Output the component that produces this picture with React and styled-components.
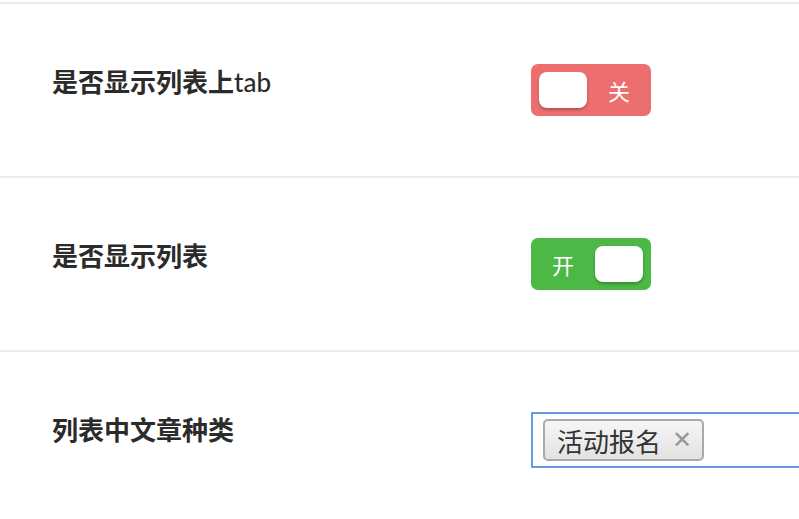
import React from "react";
import styled, { createGlobalStyle } from "styled-components";

const Global = createGlobalStyle`
  html, body { margin: 0; padding: 0; background: #fff; }
  body { font-family: "Lato", "Noto Sans CJK SC", sans-serif; color: #333; overflow: hidden; }
`;

const Page = styled.div`
  width: 799px;
  padding-top: 2px;
`;

const TopRule = styled.div`
  height: 2px;
  background: #ececec;
`;

const Row = styled.div`
  display: flex;
  align-items: flex-start;
  padding: 60px 0 60px 52px;
  border-bottom: 2px solid #ececec;
`;

const Label = styled.div`
  width: 479px;
  flex-shrink: 0;
  font-size: 26px;
  font-weight: 700;
  line-height: 36px;
  color: #2b2b2b;
`;

const Latin = styled.span`
  font-weight: 500;
`;

const Switch = styled.div`
  width: 120px;
  height: 52px;
  border-radius: 7px;
  background: ${(p) => (p.$on ? "#4cb846" : "#ed6e6e")};
  display: flex;
  flex-direction: ${(p) => (p.$on ? "row" : "row-reverse")};
  align-items: center;
  box-sizing: border-box;
  padding: ${(p) => (p.$on ? "0 8px 0 0" : "0 0 0 8px")};
  cursor: pointer;
`;

const SwitchText = styled.span`
  flex: 1;
  text-align: center;
  color: #fff;
  font-size: 22px;
  font-family: "Noto Sans CJK SC", sans-serif;
  line-height: 1;
`;

const Knob = styled.span`
  width: 48px;
  height: 36px;
  border-radius: 8px;
  background: #fff;
  box-shadow: 0 2px 3px rgba(0, 0, 0, 0.25);
  flex-shrink: 0;
`;

const SelectBox = styled.div`
  flex: 1;
  height: 56px;
  box-sizing: border-box;
  border: 2px solid #6a98e4;
  border-right: none;
  display: flex;
  align-items: center;
  padding-left: 10px;
  background: #fff;
`;

const Tag = styled.div`
  display: flex;
  align-items: center;
  height: 42px;
  box-sizing: border-box;
  padding: 0 10px 0 12px;
  border: 2px solid #aaa;
  border-radius: 5px;
  background: linear-gradient(to bottom, #f6f6f6 0%, #eaeaea 60%, #e2e2e2 100%);
  font-family: "Noto Sans CJK SC", sans-serif;
  font-size: 26px;
  color: #333;
  gap: 11px;
`;

const TagClose = styled.span`
  color: #999;
  font-size: 24px;
  font-family: "DejaVu Sans", sans-serif;
  line-height: 1;
`;

function Toggle({ on }) {
  return (
    <Switch $on={on}>
      <SwitchText>{on ? "开" : "关"}</SwitchText>
      <Knob />
    </Switch>
  );
}

export default function App() {
  return (
    <>
      <Global />
      <Page>
        <TopRule />
        <Row>
          <Label>
            是否显示列表上<Latin>tab</Latin>
          </Label>
          <Toggle on={false} />
        </Row>
        <Row>
          <Label>是否显示列表</Label>
          <Toggle on={true} />
        </Row>
        <Row>
          <Label>列表中文章种类</Label>
          <SelectBox>
            <Tag>
              活动报名
              <TagClose>✕</TagClose>
            </Tag>
          </SelectBox>
        </Row>
      </Page>
    </>
  );
}
